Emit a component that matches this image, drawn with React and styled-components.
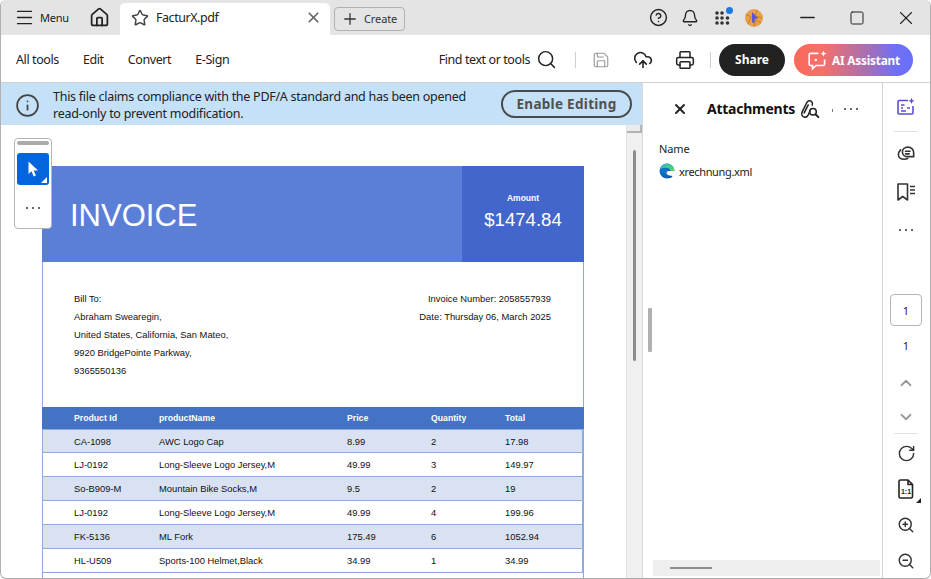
import React from "react";
import styled, { createGlobalStyle } from "styled-components";
import {
  Menu,
  Home,
  Star,
  X,
  Plus,
  CircleHelp,
  Bell,
  Search,
  Save,
  CloudUpload,
  Printer,
  Info,
  ChevronUp,
  ChevronDown,
  RotateCw,
  ZoomIn,
  ZoomOut,
  Minus,
  Square,
} from "lucide-react";

const UI_FONT = `"Noto Sans", "Open Sans", sans-serif`;
const PDF_FONT = `"Liberation Sans", Arial, sans-serif`;

const GlobalStyle = createGlobalStyle`
  html, body {
    margin: 0;
    padding: 0;
    background: #fff;
    overflow: hidden;
  }
  * { box-sizing: border-box; }
`;

const Window = styled.div`
  width: 931px;
  height: 579px;
  display: flex;
  flex-direction: column;
  overflow: hidden;
  font-family: ${UI_FONT};
  color: #222;
  border-left: 1px solid #b0b0b0;
  border-right: 1px solid #b0b0b0;
  border-bottom: 1px solid #aaa;
  border-radius: 6px;
`;

const TitleBar = styled.div`
  height: 35px;
  flex: none;
  display: flex;
  background: #e4e4e4;
  padding-top: 3px;
`;

const MenuButton = styled.div`
  width: 78px;
  display: flex;
  align-items: center;
  gap: 5px;
  padding-left: 13px;
  font-size: 11px;
  letter-spacing: -0.25px;
  margin-top: -3px;
`;

const HomeButton = styled.div`
  width: 41px;
  display: flex;
  align-items: center;
  justify-content: center;
  margin-top: -3px;
`;

const Tab = styled.div`
  width: 210px;
  background: #fff;
  border-radius: 5px 5px 0 0;
  display: flex;
  align-items: center;
  padding: 0 8px 3px 11px;
  font-size: 12.5px;
  letter-spacing: -0.45px;
  gap: 7px;
`;

const TabName = styled.span`
  flex: 1;
`;

const CreateButton = styled.div`
  width: 71px;
  height: 24px;
  margin: 4px 0 0 4px;
  display: flex;
  align-items: center;
  gap: 5px;
  padding: 0 0 1px 6px;
  border: 1px solid #b1b1b1;
  border-radius: 4px;
  font-size: 11px;
  letter-spacing: -0.1px;
  color: #333;
`;

const TitleRight = styled.div`
  margin-left: auto;
  display: flex;
  align-items: center;
  margin-top: -3px;
`;

const TitleIcon = styled.div`
  width: 32px;
  display: flex;
  justify-content: center;
  position: relative;
`;

const Dot = styled.span`
  position: absolute;
  top: -4px;
  right: 5px;
  width: 7px;
  height: 7px;
  border-radius: 50%;
  background: #1b7ae6;
`;

const Avatar = styled.div`
  width: 18px;
  height: 18px;
  border-radius: 50%;
  overflow: hidden;
  background: #e9a04a;
  display: flex;
  align-items: center;
  justify-content: center;
`;

const WindowControls = styled.div`
  display: flex;
  align-items: center;
  margin-left: 13px;
`;

const WindowControl = styled.div`
  width: 49px;
  display: flex;
  justify-content: center;
`;

const Toolbar = styled.div`
  height: 48px;
  flex: none;
  display: flex;
  align-items: center;
  background: #fff;
  border-bottom: 1px solid #d0d0d0;
  padding: 2px 17px 0 15px;
  font-size: 12.5px;
  letter-spacing: -0.4px;
`;

const ToolLinks = styled.div`
  display: flex;
  gap: 24px;
`;

const ToolRight = styled.div`
  margin-left: auto;
  display: flex;
  align-items: center;
`;

const FindBox = styled.div`
  display: flex;
  align-items: center;
  gap: 6px;
  margin-right: 14px;
  letter-spacing: -0.42px;
`;

const Divider = styled.span`
  width: 1px;
  height: 16px;
  margin: 0 4px;
  background: #cfcfcf;
`;

const ToolIcon = styled.div`
  width: 42px;
  display: flex;
  justify-content: center;
`;

const ShareButton = styled.div`
  width: 66px;
  height: 32px;
  margin-left: 4px;
  border-radius: 16px;
  background: #222;
  color: #fff;
  font-size: 12px;
  font-weight: 700;
  letter-spacing: 0;
  display: flex;
  align-items: center;
  justify-content: center;
`;

const AiButton = styled.div`
  width: 119px;
  height: 32px;
  margin-left: 9px;
  border-radius: 16px;
  background: linear-gradient(90deg, #fb6a58 0%, #f4706a 25%, #a56fb4 62%, #6f6ff5 85%, #6a70fb 100%);
  color: #fff;
  font-size: 11.8px;
  font-weight: 700;
  letter-spacing: -0.2px;
  display: flex;
  align-items: center;
  justify-content: center;
  gap: 3px;
`;

const Main = styled.div`
  flex: 1;
  min-height: 0;
  display: flex;
`;

const DocColumn = styled.div`
  width: 642px;
  flex: none;
  display: flex;
  flex-direction: column;
  position: relative;
  border-right: 1px solid #d8d8d8;
`;

const Banner = styled.div`
  height: 42px;
  flex: none;
  background: #c5e1f7;
  display: flex;
  align-items: center;
  padding: 2px 10px 0 14px;
  gap: 13px;
  font-size: 12.5px;
  line-height: 17px;
  letter-spacing: -0.27px;
  color: #222;
`;

const BannerText = styled.div`
  width: 425px;
`;

const EnableButton = styled.div`
  width: 131px;
  height: 28px;
  margin: -2px 0 0 auto;
  border: 2px solid #4b4b4b;
  border-radius: 14px;
  font-size: 13.5px;
  font-weight: 700;
  color: #505050;
  letter-spacing: 0.3px;
  display: flex;
  align-items: center;
  justify-content: center;
`;

const DocBody = styled.div`
  flex: 1;
  min-height: 0;
  display: flex;
`;

const PageArea = styled.div`
  flex: 1;
  padding: 41px 0 0 41px;
  overflow: hidden;
`;

const ScrollTrack = styled.div`
  width: 16px;
  flex: none;
  background: #f0f0f0;
  border-left: 1px solid #e2e2e2;
  display: flex;
  flex-direction: column;
  align-items: center;
`;

const ScrollCap = styled.div`
  width: 100%;
  height: 8px;
  flex: none;
  background: #ececec;
  border-bottom: 2px solid #b4b4b4;
  border-right: 2px solid #b4b4b4;
`;

const ScrollThumb = styled.div`
  width: 3px;
  height: 211px;
  margin-top: 17px;
  border-radius: 2px;
  background: #8d8d8d;
`;

const ResizeHandle = styled.div`
  position: absolute;
  left: 5px;
  top: 225px;
  width: 4px;
  height: 44px;
  border-radius: 1px;
  background: #b0b0b0;
`;

const Palette = styled.div`
  position: absolute;
  left: 13px;
  top: 55px;
  width: 38px;
  height: 91px;
  background: #fff;
  border: 1px solid #b5b5b5;
  border-radius: 4px;
  display: flex;
  flex-direction: column;
  align-items: center;
  padding-top: 2px;
`;

const Grip = styled.div`
  width: 32px;
  height: 4px;
  border-radius: 2px;
  background: #ababab;
`;

const PointerButton = styled.div`
  width: 32px;
  height: 32px;
  margin-top: 8px;
  border-radius: 3px;
  background: #0265dc;
  display: flex;
  align-items: center;
  justify-content: center;
  position: relative;
`;

const Dots = styled.div`
  display: flex;
  gap: 4px;
  justify-content: center;
  margin-top: ${(p) => p.$top || 0}px;
`;

const DotItem = styled.span`
  width: 2px;
  height: 2px;
  border-radius: 50%;
  background: #333;
`;

const Page = styled.div`
  width: 542px;
  font-family: ${PDF_FONT};
  color: #111;
`;

const InvoiceHeader = styled.div`
  height: 96px;
  display: flex;
  background: #5b7fd6;
  color: #fff;
`;

const InvoiceTitle = styled.div`
  flex: 1;
  padding: 30px 0 0 28px;
  font-size: 31px;
  line-height: 40px;
`;

const AmountBox = styled.div`
  width: 122px;
  background: #4266cc;
  display: flex;
  flex-direction: column;
  align-items: center;
  padding-top: 27px;
`;

const AmountLabel = styled.div`
  font-size: 8.5px;
  font-weight: 700;
  line-height: 11px;
`;

const AmountValue = styled.div`
  font-size: 18.6px;
  line-height: 24px;
  margin-top: 4px;
`;

const PageBody = styled.div`
  min-height: 330px;
  border-left: 1px solid #8faadc;
  border-right: 1px solid #8faadc;
`;

const Addresses = styled.div`
  height: 145px;
  display: flex;
  justify-content: space-between;
  padding: 28px 32px 0 31px;
  font-size: 9.4px;
  line-height: 18px;
`;

const RightAddress = styled.div`
  text-align: right;
`;

const TableRow = styled.div`
  display: grid;
  grid-template-columns: 85px 188px 84px 74px 1fr;
  align-items: center;
  font-size: ${(p) => (p.$head ? 8.7 : 9.4)}px;
  height: ${(p) => (p.$head ? 22 : 24)}px;
  background: ${(p) => (p.$head ? "#4472c4" : p.$shade ? "#d9e2f3" : "#fff")};
  color: ${(p) => (p.$head ? "#fff" : "#111")};
  font-weight: ${(p) => (p.$head ? 700 : 400)};
  border-bottom: ${(p) => (p.$head ? "none" : "1px solid #8faadc")};
  border-right: ${(p) => (p.$head ? "none" : "1px solid #8faadc")};
  margin: ${(p) => (p.$head ? "0 -1px" : "0")};
  padding-left: ${(p) => (p.$head ? 32 : 31)}px;
  border-top: ${(p) => (p.$first ? "1px solid #8faadc" : "none")};
`;

const SidePanel = styled.div`
  width: 240px;
  flex: none;
  display: flex;
  flex-direction: column;
  position: relative;
  border-right: 1px solid #d4d4d4;
`;

const PanelHeader = styled.div`
  height: 51px;
  flex: none;
  display: flex;
  align-items: center;
  padding-left: 29px;
`;

const PanelTitle = styled.div`
  margin: 0 4px 0 19px;
  font-size: 14px;
  font-weight: 700;
  letter-spacing: -0.25px;
  color: #111;
`;

const PanelTick = styled.span`
  width: 1px;
  height: 3px;
  margin: 4px 11px 0 11px;
  background: #777;
`;

const PanelContent = styled.div`
  flex: 1;
  padding: 7px 0 0 16px;
  font-size: 11px;
  letter-spacing: -0.1px;
`;

const AttachmentRow = styled.div`
  display: flex;
  align-items: center;
  gap: 4px;
  margin-top: 7px;
  letter-spacing: -0.35px;
`;

const NameLabel = styled.div`
  line-height: 15px;
`;

const HScroll = styled.div`
  height: 16px;
  flex: none;
  margin: 0 2px 2px 10px;
  background: #efefef;
  padding: 7px 0 0 17px;
`;

const HThumb = styled.div`
  width: 42px;
  height: 2px;
  background: #8d8d8d;
`;

const Rail = styled.div`
  flex: 1;
  display: flex;
  flex-direction: column;
  align-items: center;
  padding-right: 1px;
`;

const RailIcon = styled.div`
  height: ${(p) => p.$h || 38}px;
  width: 100%;
  flex: none;
  display: flex;
  align-items: center;
  justify-content: center;
  position: relative;
  color: ${(p) => p.$color || "#333"};
`;

const RailLine = styled.div`
  width: 24px;
  height: 1px;
  flex: none;
  background: #e1e1e1;
`;

const PageBox = styled.div`
  width: 32px;
  height: 32px;
  margin-top: 45px;
  border: 1px solid #b5b5b5;
  border-radius: 4px;
  display: flex;
  align-items: center;
  justify-content: center;
  font-size: 11px;
  flex: none;
`;

const PageCount = styled.div`
  height: 39px;
  flex: none;
  display: flex;
  align-items: center;
  font-size: 11px;
`;

const Corner = styled.span`
  position: absolute;
  right: ${(p) => p.$r}px;
  bottom: ${(p) => p.$b}px;
  width: 0;
  height: 0;
  border-left: ${(p) => p.$s}px solid transparent;
  border-bottom: ${(p) => p.$s}px solid ${(p) => p.$c};
`;

const rows = [
  ["CA-1098", "AWC Logo Cap", "8.99", "2", "17.98"],
  ["LJ-0192", "Long-Sleeve Logo Jersey,M", "49.99", "3", "149.97"],
  ["So-B909-M", "Mountain Bike Socks,M", "9.5", "2", "19"],
  ["LJ-0192", "Long-Sleeve Logo Jersey,M", "49.99", "4", "199.96"],
  ["FK-5136", "ML Fork", "175.49", "6", "1052.94"],
  ["HL-U509", "Sports-100 Helmet,Black", "34.99", "1", "34.99"],
];

const ThreeDots = ({ top }) => (
  <Dots $top={top}>
    <DotItem />
    <DotItem />
    <DotItem />
  </Dots>
);

const AppsIcon = () => (
  <svg width="15" height="14" viewBox="0 0 15 14" fill="#333">
    <circle cx="2" cy="2" r="1.8" />
    <circle cx="7" cy="2" r="1.8" />
    <circle cx="2" cy="7" r="1.8" />
    <circle cx="7" cy="7" r="1.8" />
    <circle cx="12.5" cy="7" r="1.8" />
    <circle cx="2" cy="12" r="1.8" />
    <circle cx="7" cy="12" r="1.8" />
    <circle cx="12.5" cy="12" r="1.8" />
  </svg>
);

const AiIcon = () => (
  <svg width="22" height="22" viewBox="0 0 20 20" fill="none" stroke="#fff" strokeWidth="1.5">
    <path d="M10.5 4H3.2C2.5 4 2 4.5 2 5.2v8.600c0 .7.5 1.200 1.200 1.200H5v3l3.200-3h6.600c.7 0 1.200-.5 1.200-1.200V9.500" />
    <path d="M15 1.500l.8 2 2 .8-2 .8-.8 2-.8-2-2-.8 2-.8z" fill="#fff" stroke="none" />
    <circle cx="8" cy="10" r="1.200" fill="#fff" stroke="none" />
  </svg>
);

const SummaryIcon = () => (
  <svg width="20" height="20" viewBox="0 0 20 20" fill="none" stroke="#5a4fd0" strokeWidth="1.6">
    <path d="M12 3.500H3.200C2.500 3.500 2 4 2 4.700v11.100c0 .7.5 1.200 1.200 1.200h12.600c.7 0 1.200-.5 1.200-1.200V9" />
    <path d="M5 8h3.500M5 11h2M5 14h5M11 11h3" />
    <path d="M15.500 .8l.9 2.200 2.200.9-2.200.9-.9 2.200-.9-2.200-2.200-.9 2.200-.9z" fill="#5a4fd0" stroke="none" />
  </svg>
);

const AttachSearchIcon = () => (
  <svg width="22" height="20" viewBox="0 0 20 18" fill="none" stroke="#222" strokeWidth="1.4" strokeLinecap="round">
    <path d="M5.500 16.500c-2 0-3.700-2-2.900-4.200L7 3.300C8 1.200 10.200 1 11.400 2.200c1 1 1.200 2 .6 3.300" />
    <path d="M5.500 16.500c1.300 0 2.200-.7 2.800-1.900L10 11" />
    <path d="M4.700 12.600l3.700-7.300" />
    <circle cx="12.700" cy="11.500" r="3" />
    <path d="M15 13.800l2.600 2.600" strokeWidth="1.800" />
  </svg>
);

const CommentIcon = () => (
  <svg width="18" height="18" viewBox="0 0 20 20" fill="none" stroke="#333" strokeWidth="1.800" strokeLinecap="round">
    <path d="M12 3.500c3.500 0 6.500 2.600 6.500 6v4.500H12c-3.500 0-6-2.200-6-5.200 0-3 2.500-5.300 6-5.300z" />
    <path d="M9.500 8h5M9.500 11h4" />
    <path d="M4 6.500C2.500 8 1.500 9.800 1.500 11.800c0 3.200 3 5.200 6.500 5.200 1.500 0 3-.4 4-1" />
  </svg>
);

const BookmarkListIcon = () => (
  <svg width="20" height="20" viewBox="0 0 20 20" fill="none" stroke="#333" strokeWidth="1.600">
    <path d="M2 2h9.500v16l-4.750-3.500L2 18z" strokeLinejoin="round" />
    <path d="M14 4.500h5M14 8h5M14 11.500h5" strokeWidth="1.500" />
  </svg>
);

const FitPageIcon = () => (
  <svg width="16" height="20" viewBox="0 0 16 20" fill="none" stroke="#222" strokeWidth="1.600" strokeLinejoin="round">
    <path d="M2.500 1H10l4.500 4.500v12c0 .8-.6 1.500-1.400 1.500H2.500c-.8 0-1.500-.7-1.500-1.500V2.500C1 1.700 1.700 1 2.500 1z" />
    <path d="M10 1v4.500h4.500" />
    <text x="8" y="15" textAnchor="middle" fontSize="7" fontWeight="700" fill="#222" stroke="none" fontFamily="Liberation Sans, sans-serif">
      1:1
    </text>
  </svg>
);

const EdgeIcon = () => (
  <svg width="16" height="16" viewBox="0 0 16 16">
    <defs>
      <linearGradient id="edgeBlue" x1="0" y1="0" x2="1" y2="1">
        <stop offset="0" stopColor="#1284d8" />
        <stop offset="1" stopColor="#0b4c9c" />
      </linearGradient>
      <linearGradient id="edgeGreen" x1="0" y1="0" x2="1" y2="1">
        <stop offset="0" stopColor="#2fb9d0" />
        <stop offset="1" stopColor="#62d84e" />
      </linearGradient>
    </defs>
    <circle cx="8" cy="8" r="7.500" fill="url(#edgeBlue)" />
    <path d="M.8 6C2 2.700 4.800.5 8 .5a7.500 7.500 0 0 1 7.500 7.500c0 1-.2 1.700-.6 2.200H10.500c1-.5 1.300-1.300 1-2.200C11 6 9 4.800 6.500 4.800 4.200 4.800 2.200 5.200.8 6z" fill="url(#edgeGreen)" />
    <path d="M10 8h6.500v5.500H10a2.750 2.750 0 0 1 0-5.500z" fill="#fff" />
    <path d="M8.600 6.500c-.9.700-1.400 1.700-1.300 2.700.1 1.700 1.500 3 3.700 3.400l2.500.3-1.500 2H6l-1-5 1-3.500z" fill="url(#edgeBlue)" />
  </svg>
);

const PointerIcon = () => (
  <svg width="11" height="17" viewBox="0 0 11 17" fill="#fff">
    <path d="M.5 .5v12.500l3-2.800 2.200 5.300 2.200-1-2.200-5h4.300z" />
  </svg>
);

const AvatarMark = () => (
  <svg width="18" height="18" viewBox="0 0 18 18" fill="none">
    <path d="M1 5l5 3-3 7M12 1l-2 6 7 2M9 17l2-6 5 3" stroke="#c97a24" strokeWidth="1" />
    <path d="M7 3l6 6.500-3 .5-1 4.500-2-1.500z" fill="#5a55d8" />
  </svg>
);

const App = () => {
  return (
    <>
      <GlobalStyle />
      <Window>
        <TitleBar>
          <MenuButton>
            <Menu size={21} strokeWidth={1.5} />
            Menu
          </MenuButton>
          <HomeButton>
            <Home size={21} strokeWidth={2} />
          </HomeButton>
          <Tab>
            <Star size={18} strokeWidth={2} color="#444" />
            <TabName>FacturX.pdf</TabName>
            <X size={17} strokeWidth={2.4} color="#666" />
          </Tab>
          <CreateButton>
            <Plus size={18} strokeWidth={1.7} />
            Create
          </CreateButton>
          <TitleRight>
            <TitleIcon>
              <CircleHelp size={19} strokeWidth={1.8} />
            </TitleIcon>
            <TitleIcon>
              <Bell size={18} strokeWidth={1.8} />
            </TitleIcon>
            <TitleIcon>
              <AppsIcon />
              <Dot />
            </TitleIcon>
            <TitleIcon>
              <Avatar>
                <AvatarMark />
              </Avatar>
            </TitleIcon>
            <WindowControls>
              <WindowControl>
                <Minus size={23} strokeWidth={1.4} />
              </WindowControl>
              <WindowControl>
                <Square size={16} strokeWidth={1.5} />
              </WindowControl>
              <WindowControl>
                <X size={22} strokeWidth={1.2} />
              </WindowControl>
            </WindowControls>
          </TitleRight>
        </TitleBar>
        <Toolbar>
          <ToolLinks>
            <span>All tools</span>
            <span>Edit</span>
            <span>Convert</span>
            <span>E-Sign</span>
          </ToolLinks>
          <ToolRight>
            <FindBox>
              Find text or tools
              <Search size={21} strokeWidth={1.7} />
            </FindBox>
            <Divider />
            <ToolIcon>
              <Save size={18} strokeWidth={1.5} color="#999" />
            </ToolIcon>
            <ToolIcon>
              <CloudUpload size={20} strokeWidth={1.9} />
            </ToolIcon>
            <ToolIcon>
              <Printer size={20} strokeWidth={1.8} />
            </ToolIcon>
            <Divider />
            <ShareButton>Share</ShareButton>
            <AiButton>
              <AiIcon />
              AI Assistant
            </AiButton>
          </ToolRight>
        </Toolbar>
        <Main>
          <DocColumn>
            <Banner>
              <Info size={25} strokeWidth={1.7} color="#444" />
              <BannerText>
                This file claims compliance with the PDF/A standard and has been opened
                read-only to prevent modification.
              </BannerText>
              <EnableButton>Enable Editing</EnableButton>
            </Banner>
            <DocBody>
              <PageArea>
                <Page>
                  <InvoiceHeader>
                    <InvoiceTitle>INVOICE</InvoiceTitle>
                    <AmountBox>
                      <AmountLabel>Amount</AmountLabel>
                      <AmountValue>$1474.84</AmountValue>
                    </AmountBox>
                  </InvoiceHeader>
                  <PageBody>
                    <Addresses>
                      <div>
                        Bill To:
                        <br />
                        Abraham Swearegin,
                        <br />
                        United States, California, San Mateo,
                        <br />
                        9920 BridgePointe Parkway,
                        <br />
                        9365550136
                      </div>
                      <RightAddress>
                        Invoice Number: 2058557939
                        <br />
                        Date: Thursday 06, March 2025
                      </RightAddress>
                    </Addresses>
                    <TableRow $head>
                      <span>Product Id</span>
                      <span>productName</span>
                      <span>Price</span>
                      <span>Quantity</span>
                      <span>Total</span>
                    </TableRow>
                    {rows.map((row, i) => (
                      <TableRow key={i} $shade={i % 2 === 0} $first={i === 0}>
                        {row.map((cell, j) => (
                          <span key={j}>{cell}</span>
                        ))}
                      </TableRow>
                    ))}
                  </PageBody>
                </Page>
              </PageArea>
              <ScrollTrack>
                <ScrollCap />
                <ScrollThumb />
              </ScrollTrack>
            </DocBody>
            <Palette>
              <Grip />
              <PointerButton>
                <PointerIcon />
                <Corner $r={2} $b={2} $s={6} $c="#fff" />
              </PointerButton>
              <ThreeDots top={22} />
            </Palette>
          </DocColumn>
          <SidePanel>
            <ResizeHandle />
            <PanelHeader>
              <X size={16} strokeWidth={3} color="#222" />
              <PanelTitle>Attachments</PanelTitle>
              <AttachSearchIcon />
              <PanelTick />
              <ThreeDots />
            </PanelHeader>
            <PanelContent>
              <NameLabel>Name</NameLabel>
              <AttachmentRow>
                <EdgeIcon />
                xrechnung.xml
              </AttachmentRow>
            </PanelContent>
            <HScroll>
              <HThumb />
            </HScroll>
          </SidePanel>
          <Rail>
            <RailIcon $h={48}>
              <SummaryIcon />
            </RailIcon>
            <RailLine />
            <RailIcon $h={41}>
              <CommentIcon />
            </RailIcon>
            <RailIcon $h={38}>
              <BookmarkListIcon />
            </RailIcon>
            <RailIcon $h={38}>
              <ThreeDots />
            </RailIcon>
            <PageBox>1</PageBox>
            <PageCount>1</PageCount>
            <RailIcon $h={35} $color="#9a9a9a">
              <ChevronUp size={18} strokeWidth={2.4} />
            </RailIcon>
            <RailIcon $h={33} $color="#9a9a9a">
              <ChevronDown size={18} strokeWidth={2.4} />
            </RailIcon>
            <RailLine />
            <RailIcon $h={38}>
              <RotateCw size={19} strokeWidth={1.8} />
            </RailIcon>
            <RailIcon $h={34}>
              <FitPageIcon />
              <Corner $r={8} $b={3} $s={5} $c="#222" />
            </RailIcon>
            <RailIcon $h={38}>
              <ZoomIn size={18} strokeWidth={1.9} />
            </RailIcon>
            <RailIcon $h={34}>
              <ZoomOut size={18} strokeWidth={1.9} />
            </RailIcon>
          </Rail>
        </Main>
      </Window>
    </>
  );
};

export default App;
